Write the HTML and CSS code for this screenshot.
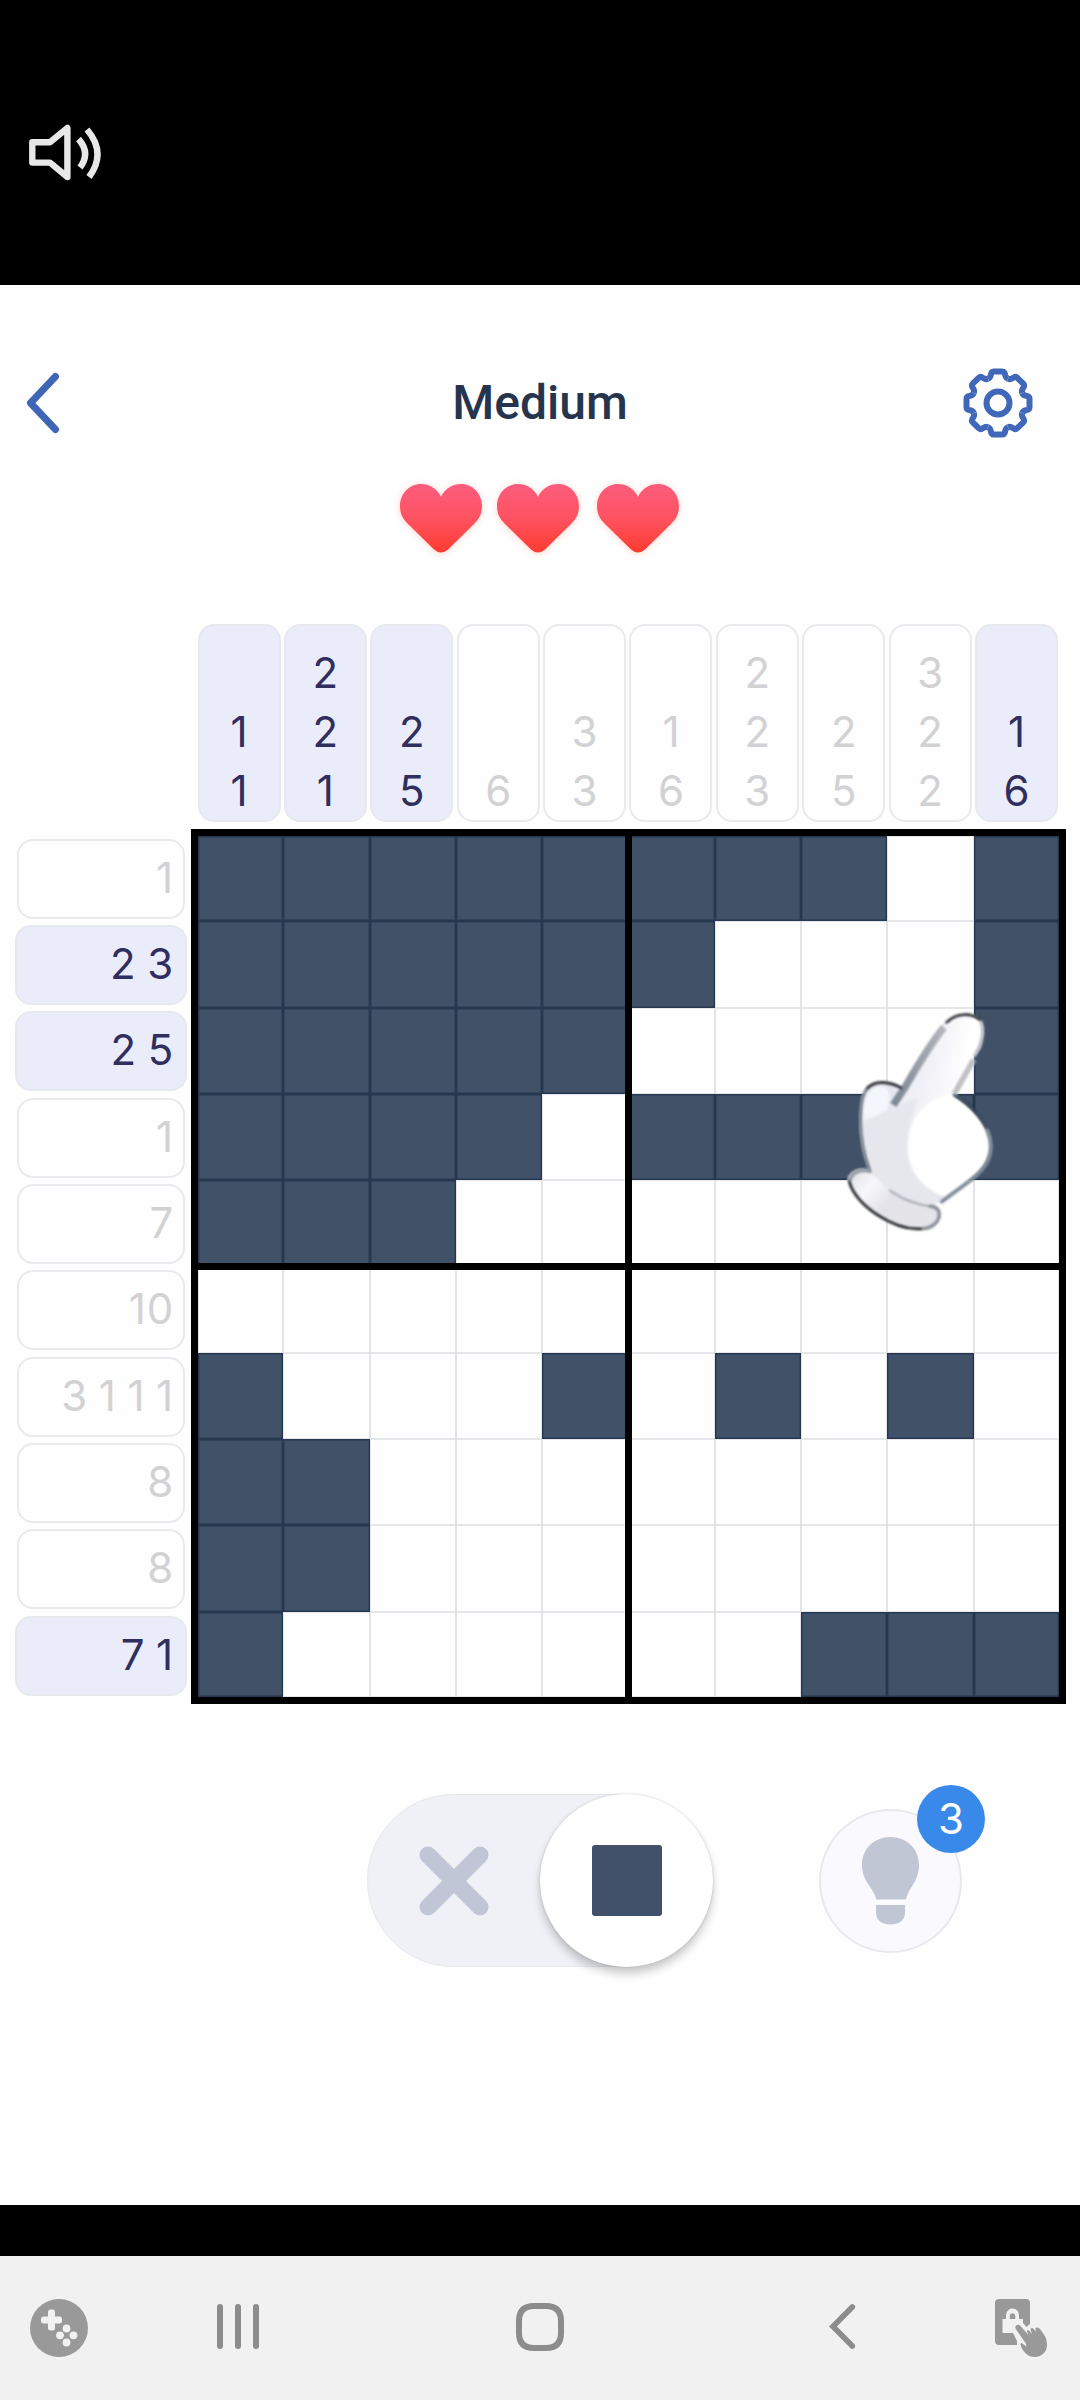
FILE: index.html
```html
<!DOCTYPE html>
<html lang="en">
<head>
<meta charset="utf-8">
<title>Nonogram</title>
<link rel="stylesheet" href="styles.css">
</head>
<body>
<div class="status">
  <svg width="80" height="70" viewBox="25 117 80 70" fill="none" stroke="#e8e8e8" stroke-width="6.4">
    <path d="M32.3 142.2H50L67.4 128V177L50 162.6H32.3Z" stroke-linejoin="round"/>
    <path d="M78.500 139Q91 153 80 167.500M87 129.500Q107 153 89 177"/>
  </svg>
</div>
<main class="game">
  <header class="top">
    <svg width="40" height="66" viewBox="24 370 40 66" fill="none" stroke="#3f65b6" stroke-width="7" stroke-linecap="round" stroke-linejoin="round"><path d="M55.500 376.500L30.500 403L55.500 429.500"/></svg>
    <h1>Medium</h1>
    <svg width="72" height="72" viewBox="-36 -36 72 72" fill="none" stroke="#4067b8" stroke-width="6">
      <defs><path id="tooth" d="M-10-24.200C-8.200-25-7.600-26-7.200-28C-6.800-30.800-6-31.500-4.200-31.500H4.200C6-31.500 6.800-30.800 7.200-28C7.600-26 8.200-25 10-24.200"/></defs>
      <use href="#tooth"/><use href="#tooth" transform="rotate(45)"/><use href="#tooth" transform="rotate(90)"/><use href="#tooth" transform="rotate(135)"/><use href="#tooth" transform="rotate(180)"/><use href="#tooth" transform="rotate(225)"/><use href="#tooth" transform="rotate(270)"/><use href="#tooth" transform="rotate(315)"/>
      <circle r="11.500"/>
    </svg>
  </header>
  <div class="lives">
    <svg width="82" height="69" viewBox="0 0 82 69"><defs><linearGradient id="red" x1="0" y1="0" x2="0" y2="1"><stop offset="0" stop-color="#fb5d7d"/><stop offset=".5" stop-color="#fe5261"/><stop offset="1" stop-color="#ff3b30"/></linearGradient></defs><path id="heart" fill="url(#red)" d="M41 13C37 4 29 0 21 0C9 0 0 10 0 22C0 30 3 35 8 40L34 65.500Q41 71.500 48 65.500L74 40C79 35 82 30 82 22C82 10 73 0 61 0C53 0 45 4 41 13Z"/></svg>
    <svg width="82" height="69" viewBox="0 0 82 69"><use href="#heart"/></svg>
    <svg width="82" height="69" viewBox="0 0 82 69"><use href="#heart"/></svg>
  </div>
  <section class="puzzle">
    <div class="cols">
      <div class="clue on"><span>1</span><span>1</span></div>
      <div class="clue on"><span>2</span><span>2</span><span>1</span></div>
      <div class="clue on"><span>2</span><span>5</span></div>
      <div class="clue"><span>6</span></div>
      <div class="clue"><span>3</span><span>3</span></div>
      <div class="clue"><span>1</span><span>6</span></div>
      <div class="clue"><span>2</span><span>2</span><span>3</span></div>
      <div class="clue"><span>2</span><span>5</span></div>
      <div class="clue"><span>3</span><span>2</span><span>2</span></div>
      <div class="clue on"><span>1</span><span>6</span></div>
    </div>
    <div class="rows">
      <div class="clue">1</div>
      <div class="clue on">2 3</div>
      <div class="clue on">2 5</div>
      <div class="clue">1</div>
      <div class="clue">7</div>
      <div class="clue">10</div>
      <div class="clue">3 1 1 1</div>
      <div class="clue">8</div>
      <div class="clue">8</div>
      <div class="clue on">7 1</div>
    </div>
    <div class="board">
      <i class="f"></i><i class="f"></i><i class="f"></i><i class="f"></i><i class="f"></i><i class="f"></i><i class="f"></i><i class="f"></i><i></i><i class="f"></i>
      <i class="f"></i><i class="f"></i><i class="f"></i><i class="f"></i><i class="f"></i><i class="f"></i><i></i><i></i><i></i><i class="f"></i>
      <i class="f"></i><i class="f"></i><i class="f"></i><i class="f"></i><i class="f"></i><i></i><i></i><i></i><i></i><i class="f"></i>
      <i class="f"></i><i class="f"></i><i class="f"></i><i class="f"></i><i></i><i class="f"></i><i class="f"></i><i class="f"></i><i class="f"></i><i class="f"></i>
      <i class="f"></i><i class="f"></i><i class="f"></i><i></i><i></i><i></i><i></i><i></i><i></i><i></i>
      <i></i><i></i><i></i><i></i><i></i><i></i><i></i><i></i><i></i><i></i>
      <i class="f"></i><i></i><i></i><i></i><i class="f"></i><i></i><i class="f"></i><i></i><i class="f"></i><i></i>
      <i class="f"></i><i class="f"></i><i></i><i></i><i></i><i></i><i></i><i></i><i></i><i></i>
      <i class="f"></i><i class="f"></i><i></i><i></i><i></i><i></i><i></i><i></i><i></i><i></i>
      <i class="f"></i><i></i><i></i><i></i><i></i><i></i><i></i><i class="f"></i><i class="f"></i><i class="f"></i>
      <svg class="hand" width="280" height="300" viewBox="0 0 840 900">
        <defs>
          <linearGradient id="edge" x1="0" y1="0" x2="1" y2="0"><stop offset="0" stop-color="#7d8794"/><stop offset="1" stop-color="#b4b4bc"/></linearGradient>
          <linearGradient id="cuff" x1="0" y1="0" x2="1" y2=".6"><stop offset="0" stop-color="#dcdde4"/><stop offset=".3" stop-color="#f8f8fc"/><stop offset=".55" stop-color="#e3e3e9"/><stop offset="1" stop-color="#e4e4e9"/></linearGradient>
          <linearGradient id="finger" x1="0" y1="0" x2="1" y2=".4"><stop offset="0" stop-color="#e9e9f0"/><stop offset=".45" stop-color="#f1f1f7"/><stop offset=".75" stop-color="#fff"/></linearGradient>
          <filter id="soft" x="-10%" y="-10%" width="120%" height="120%"><feGaussianBlur stdDeviation="3"/></filter>
        </defs>
        <g filter="url(#soft)">
          <path d="M145 590C165 560 195 565 215 580L400 672C430 680 425 715 405 737C365 765 290 745 225 705C170 668 140 625 145 590Z" fill="url(#cuff)"/>
          <path d="M310 322C345 255 385 185 425 137C455 97 510 90 538 117C555 140 550 175 535 210L458 342C500 370 540 405 562 450C590 510 560 565 510 600L440 655C400 690 330 670 270 635L215 580C185 525 175 450 183 380C185 340 200 315 225 306C255 300 285 310 310 322Z" fill="#e6e7ed"/>
          <path d="M290 365C340 270 390 180 440 132C475 100 520 100 540 125C550 150 540 190 525 220L458 342C500 370 535 405 557 450C580 510 555 560 508 597L435 650C350 620 310 550 322 470C330 420 350 380 350 355L265 385Z" fill="url(#finger)"/>
          <path d="M455 345C500 370 535 405 557 450C580 510 555 560 508 597L430 645C350 615 310 545 330 455C345 395 390 350 455 345Z" fill="#fff"/>
          <path d="M190 420Q188 330 235 320Q285 320 260 390L225 410Z" fill="#f3f7fb"/>
        </g>
        <g fill="none" stroke-linecap="round" filter="url(#soft)">
          <path d="M280 375L315 322C350 262 388 195 432 142" stroke="url(#edge)" stroke-width="22" stroke-linecap="butt"/>
          <path d="M440 127C470 97 515 98 542 121" stroke="#303238" stroke-width="8"/>
          <path d="M543 127Q554 152 540 200L524 225" stroke="#c5c7ce" stroke-width="9"/>
          <path d="M518 245L466 336" stroke="#c1c0c5" stroke-width="17"/>
          <path d="M200 327C225 298 270 305 304 324" stroke="#303339" stroke-width="9"/>
          <path d="M198 330C177 360 172 470 208 568" stroke="#7b8490" stroke-width="9"/>
          <path d="M463 346C500 369 540 405 562 452" stroke="#273442" stroke-width="7"/>
          <path d="M562 452C590 520 560 565 510 602L425 665" stroke="#7f8a98" stroke-width="11"/>
          <path d="M270 632C310 660 350 675 395 679" stroke="#a9abb2" stroke-width="6"/>
          <path d="M208 572Q160 565 148 602" stroke="#9a9ea6" stroke-width="12"/>
          <path d="M148 605C165 675 285 755 370 746" stroke="#24262b" stroke-width="8"/>
          <path d="M370 746C410 741 425 710 414 690Q400 677 390 679" stroke="#8b8f96" stroke-width="10"/>
        </g>
      </svg>
    </div>
  </section>
  <div class="tools">
    <div class="toggle">
      <svg width="70" height="70" viewBox="0 0 70 70" stroke="#c1c6d6" stroke-width="17" stroke-linecap="round"><path d="M9 9L61 61M61 9L9 61"/></svg>
      <div class="knob"><b></b></div>
    </div>
    <div class="hint">
      <svg width="58" height="88" viewBox="0 0 58 88" fill="#c1c6d5"><path d="M14.500 62.500C11 50 0 44 0 28C0 12 12 0 28.500 0S57 12 57 28C57 44 47 50 44 62.500ZM14 68H43V76C43 83 37 87.500 28.500 87.500S14 83 14 76Z"/></svg>
      <span class="badge">3</span>
    </div>
  </div>
</main>
<div class="strip"></div>
<nav class="nav">
  <svg width="58" height="58" viewBox="0 0 58 58"><circle cx="29" cy="29" r="29" fill="#999"/><g fill="#f1f1f1"><rect x="18" y="10.500" width="7" height="21" rx="2.500"/><rect x="11" y="17.500" width="21" height="7" rx="2.500"/><circle cx="36.500" cy="29.500" r="3.900"/><circle cx="30" cy="36.300" r="3.900"/><circle cx="43.500" cy="36.300" r="3.900"/><circle cx="36.500" cy="43.500" r="3.900"/></g></svg>
  <svg width="42" height="45" viewBox="0 0 42 45" fill="#8c8c8c"><rect width="6" height="45" rx="3"/><rect x="18" width="6" height="45" rx="3"/><rect x="36" width="6" height="45" rx="3"/></svg>
  <svg width="48" height="48" viewBox="0 0 48 48" fill="none" stroke="#8c8c8c" stroke-width="6"><path d="M18 3H30Q45 3 45 18V30Q45 45 30 45H18Q3 45 3 30V18Q3 3 18 3Z"/></svg>
  <svg width="27" height="45" viewBox="0 0 27 45" fill="none" stroke="#8c8c8c" stroke-width="5.600" stroke-linecap="round"><path d="M23.300 3L4 22.500L23.300 42"/></svg>
  <svg width="53" height="58" viewBox="0 0 53 58" fill="#999">
    <path d="M4 0H31Q35 0 35 4V25L31.500 28L28 24V20H24V17C24 7 11 7 11 17V20H7.500V34H18L22 42V46H4Q0 46 0 42V4Q0 0 4 0ZM14.800 20V17C14.800 13.300 20.300 13.300 20.300 17V20Z"/>
    <path d="M20.500 29.500C19.500 26.500 23 24.500 25.500 27L33.500 36C32 32 31.500 31.500 32.500 31C34 30.500 35 33 37 35C35.500 31 35 29.500 36.500 29C38.500 28.500 40 31.500 41.500 34C40 30.500 40 28.500 42 28.500C45 29 46.500 32 48.500 35C50.500 38 52 40.500 52 46C52 52 47.500 58 39.500 58C33 58 28 53 26 47C25 45 26 43 27.500 44.500L30.500 47C32 47 31.500 46 30.500 44Z"/>
  </svg>
</nav>
</body>
</html>
```
FILE: styles.css
```css
* { box-sizing: border-box; }
body { margin: 0; width: 1080px; height: 2400px; background: #fff; overflow: hidden; font-family: Inter, "Liberation Sans", sans-serif; }
svg { display: block; flex: none; }

.status { height: 285px; background: #000; padding: 117px 0 0 25px; }
.game { height: 1920px; background: #fefefe; }

.top { display: flex; justify-content: space-between; align-items: center; height: 236px; padding: 0 46px 0 24px; }
.top h1 { margin: 0 0 0 54px; font: 500 48px/60px Roboto, sans-serif; color: #26354d; }

.lives { display: flex; gap: 15px; height: 103px; margin: -37px 0 0 400px; align-items: flex-start; }
.lives svg:last-child { margin-left: 3px; }
.lives svg { overflow: visible; filter: drop-shadow(0 1px 3px rgba(255, 120, 90, .3)); }

.puzzle { display: grid; grid-template-columns: 172px 875px; grid-template-rows: 198px 875px; gap: 7.5px 4px; padding: 36.5px 0 0 15px; }
.clue { border: 2px solid #e9e9ee; border-radius: 16px; color: #d2d2d5; font-size: 42px; }
.clue.on { background: #eaedf9; border-color: #e8e8ef; color: #302e5f; }

.cols { grid-column: 2; display: grid; grid-template-columns: repeat(10, 83px); column-gap: 3.4px; margin-left: 6.5px; }
.cols .clue { display: flex; flex-direction: column; justify-content: flex-end; align-items: center; }
.cols span { line-height: 59px; height: 59px; }

.rows { display: grid; grid-template-rows: repeat(10, 80px); row-gap: 6.35px; padding-top: 9.5px; }
.rows .clue { display: flex; justify-content: flex-end; align-items: center; margin: 0 2px; padding: 0 9px 3px 0; white-space: pre; letter-spacing: .8px; word-spacing: -1.8px; }
.rows .clue.on { margin: 0; padding-right: 11px; }

.board { position: relative; display: grid; grid-template: 85.3px repeat(8, 86.3px) 85.3px / 85.3px repeat(8, 86.3px) 85.3px; border: 7px solid #000; background: #fefefe; }
.board i { box-shadow: inset 0 0 0 .8px #dddee2; }
.board i.f { background: #405168; box-shadow: inset 0 0 0 1.4px #263850; }
.board::before, .board::after { content: ""; position: absolute; background: #000; }
.board::before { left: 427px; top: 0; width: 7px; height: 861px; }
.board::after { left: 0; top: 427px; width: 861px; height: 7px; }
.hand { position: absolute; left: 602px; top: 144px; z-index: 1; }

.tools { display: flex; align-items: flex-start; padding: 90px 0 0 367px; }
.toggle { display: flex; align-items: center; justify-content: space-between; width: 346px; height: 173px; padding-left: 51px; border: 1px solid #e6e7eb; border-radius: 87px; background: #eff1f6; }
.knob { display: grid; place-items: center; width: 173px; height: 173px; margin-right: -1px; border-radius: 50%; background: #fff; box-shadow: 0 7px 9px rgba(0, 0, 0, .2), 0 0 3px rgba(0, 0, 0, .15); }
.knob b { width: 70px; height: 71px; border-radius: 3px; background: #405169; }
.hint { position: relative; display: grid; place-items: center; width: 143px; height: 144px; margin: 15px 0 0 106px; border: 2px solid #e8e8ee; border-radius: 50%; background: #fafafe; }
.badge { position: absolute; left: 96px; top: -26px; width: 68px; height: 68px; border-radius: 50%; background: #3989ea; color: #fff; font-size: 42px; line-height: 68px; text-align: center; }

.strip { height: 51px; background: #000; }
.nav { display: flex; align-items: center; height: 144px; padding-left: 30px; background: #f1f1f1; }
.nav svg:nth-child(2) { margin: -3px 0 0 129px; }
.nav svg:nth-child(3) { margin: -3px 0 0 257px; }
.nav svg:nth-child(4) { margin: -3px 0 0 265px; }
.nav svg:nth-child(5) { margin-left: 139px; }
```
